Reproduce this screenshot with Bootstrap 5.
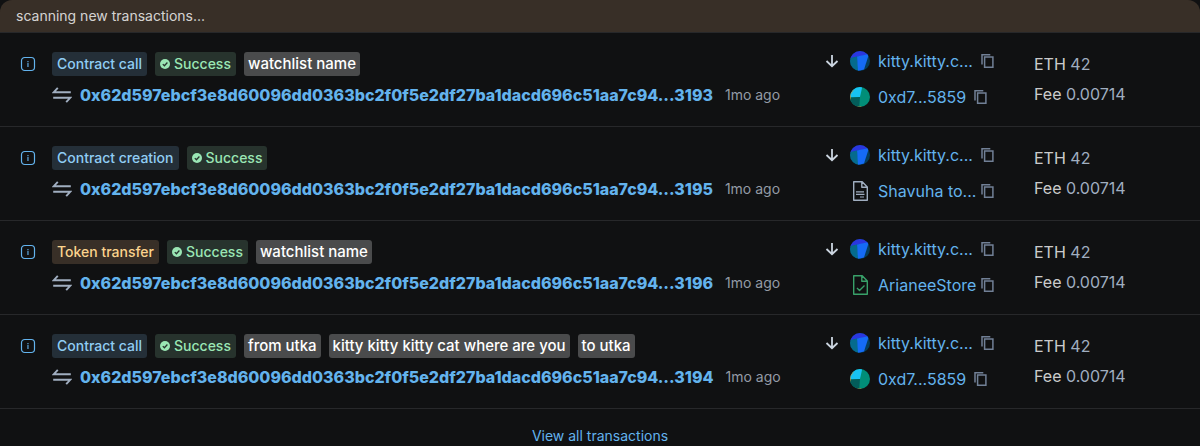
<!DOCTYPE html>
<html lang="en" data-bs-theme="dark">
<head>
<meta charset="utf-8">
<meta name="viewport" content="width=device-width, initial-scale=1">
<title>Transactions</title>
<link href="https://cdn.jsdelivr.net/npm/bootstrap@5.3.0/dist/css/bootstrap.min.css" rel="stylesheet">
<style>
body{background:#101112;color:rgba(255,255,255,.8);font-family:Inter,sans-serif;font-size:16px;line-height:24px}
a{color:#63b3ed;text-decoration:none}
svg{display:block;flex-shrink:0}
.scan{background:#382f27;border-radius:12px 12px 0 0;font-size:14px;line-height:20px;padding:6px 16px}
.tx{display:grid;grid-template-columns:minmax(0,1fr) 210px 150px;border-top:1px solid #27282a;padding:16px 16px 15px}
.tx-last{border-bottom:1px solid #27282a}
.info-btn{width:24px;height:30px;margin-right:12px;color:#63b3ed}
.tag-row{height:30px}
.tx-tag{font-size:14px;font-weight:500;line-height:24px;padding:0 5px;border-radius:3px;white-space:nowrap}
.tag-gray{background:#4a4b4c;color:#fff;font-size:15px;padding:0 4px}
.tag-blue{background:#242f38;color:#90cdf4}
.tag-green{background:#27332d;color:#9ae6b4}
.tag-orange{background:#382f27;color:#fbd38d}
.hash-row{height:32px;color:#a0aec0}
.hash{font-weight:800}
.age{font-size:14px;color:#949ba6;white-space:nowrap}
.parties{column-gap:10px}
.addr-list{row-gap:12px}
.addr{height:24px}
.addr-cut{width:95px}
.copy-btn{color:#718096}
.sum div{line-height:30px}
.muted-val{color:#a0aec0}
.all-link{font-size:14px;line-height:20px;padding-top:17px}
</style>
<script src="https://cdn.jsdelivr.net/npm/bootstrap@5.3.0/dist/js/bootstrap.bundle.min.js"></script>
</head>
<body>
<svg width="0" height="0" class="position-absolute" aria-hidden="true">
<symbol id="info" viewBox="0 0 16 16"><rect x="1.5" y="1.5" width="13" height="13" rx="3.2" fill="none" stroke="currentColor" stroke-width="1.2"/><path d="M7.2 5h1.5v1.2H7.2zM7.2 7h1.5v4H7.2z" fill="currentColor" opacity=".75"/></symbol>
<symbol id="ok" viewBox="0 0 10 10"><circle cx="5" cy="5" r="5" fill="currentColor"/><path d="M2.8 5.1l1.6 1.6L7.4 3.5" fill="none" stroke="#27332d" stroke-width="1.3"/></symbol>
<symbol id="swap" viewBox="0 0 20 20"><path d="M18.8 7.2H1.8L5.8 2.8M1.2 12.8h17L14.2 17.2" fill="none" stroke="currentColor" stroke-width="1.9"/></symbol>
<symbol id="down" viewBox="0 0 16 16"><path d="M8 2v11M2.5 8L8 13.2 13.5 8" fill="none" stroke="#cbd5e0" stroke-width="1.8"/></symbol>
<symbol id="copy" viewBox="0 0 14 16"><path d="M1 11.5V1.7h8.3M3.6 4h8.3v10.3H3.6z" fill="none" stroke="currentColor" stroke-width="1.5"/></symbol>
<clipPath id="disc"><circle cx="10" cy="10" r="10"/></clipPath>
<symbol id="kitty" viewBox="0 0 20 20"><g clip-path="url(#disc)"><path fill="#043d5c" d="M0 0h20v20H0z"/><path fill="#2a37df" d="M0 0h20v4L8 5.5 0 8z"/><path fill="#056b8d" d="M0 7l7-1.6L9 20H0z"/><path fill="#156bf5" d="M7 5.5L19 3l-5 15.5L8 20z"/></g></symbol>
<symbol id="pie" viewBox="0 0 20 20"><g clip-path="url(#disc)"><path fill="#018e78" d="M0 0h20v20H0z"/><path fill="#17c3f3" d="M0 0h12.2L10 10l-10 .5z"/><path fill="#035d5a" d="M0 10.5L10 10l-.8 10H0z"/><path d="M.4 12.5A9.8 9.8 0 0 1 3.4 2.8M7.5 19.6a9.8 9.8 0 0 0 4 .2" fill="none" stroke="#c98a2e" stroke-width=".8"/></g></symbol>
<symbol id="doc" viewBox="0 0 20 20"><path d="M3.7.7h8.5l5.1 5.2v13.4H3.7zM11.8.8v5.4h5.3" fill="none" stroke="#a0aec0" stroke-width="1.4" stroke-linejoin="round"/><path d="M6 10.8h8M6 13.4h8.5M10 16h4" stroke="#a0aec0" stroke-width="1.2"/></symbol>
<symbol id="doc-ok" viewBox="0 0 20 20"><path d="M3.7.7h8.5l5.1 5.2v13.4H3.7zM11.8.8v5.4h5.3M7 13l2.5 2.5 5-5" fill="none" stroke="#38a169" stroke-width="1.4" stroke-linejoin="round"/></symbol>
</svg>
<main>
<div class="scan">scanning new transactions...</div>
<div id="list"></div>
<div class="all-link text-center"><a href="#">View all transactions</a></div>
</main>
<script>
const ic=(n,w,h)=>`<svg width="${w}" height="${h||w}" aria-hidden="true"><use href="#${n}"/></svg>`;
const rows=[
 {type:'Contract call',tone:'blue',tags:['watchlist name'],end:'3193',to:['pie','0xd7...5859','']},
 {type:'Contract creation',tone:'blue',tags:[],end:'3195',to:['doc','Shavuha to...','addr-cut']},
 {type:'Token transfer',tone:'orange',tags:['watchlist name'],end:'3196',to:['doc-ok','ArianeeStore','addr-cut']},
 {type:'Contract call',tone:'blue',tags:['from utka','kitty kitty kitty cat where are you','to utka'],end:'3194',to:['pie','0xd7...5859','']}
];
const addr=([icon,name,cls])=>`<div class="addr d-flex align-items-center">${ic(icon,20)}<a href="#" class="mx-2 ${cls} text-nowrap">${name}</a><button class="copy-btn btn p-0 border-0" aria-label="Copy address">${ic('copy',14,16)}</button></div>`;
document.getElementById('list').innerHTML=rows.map((r,i)=>`
<div class="tx ${i===rows.length-1?'tx-last':''}">
 <div class="d-flex">
  <button class="info-btn btn p-0 border-0 d-flex align-items-center justify-content-center" aria-label="Transaction details">${ic('info',16)}</button>
  <div>
   <div class="tag-row d-flex align-items-center gap-2"><span class="tx-tag tag-${r.tone}">${r.type}</span><span class="tx-tag tag-green d-flex align-items-center gap-1">${ic('ok',10)}Success</span>${r.tags.map(t=>`<span class="tx-tag tag-gray">${t}</span>`).join('')}</div>
   <div class="hash-row d-flex align-items-center gap-2">${ic('swap',20)}<a href="#" class="hash">0x62d597ebcf3e8d60096dd0363bc2f0f5e2df27ba1dacd696c51aa7c94...${r.end}</a><span class="age ms-1">1mo ago</span></div>
  </div>
 </div>
 <div class="parties d-flex"><div class="addr d-flex align-items-center">${ic('down',16)}</div><div class="addr-list d-flex flex-column">${addr(['kitty','kitty.kitty.c...','addr-cut'])}${addr(r.to)}</div></div>
 <div class="sum"><div>ETH <span class="muted-val">42</span></div><div>Fee <span class="muted-val">0.00714</span></div></div>
</div>`).join('');
</script>
</body>
</html>
